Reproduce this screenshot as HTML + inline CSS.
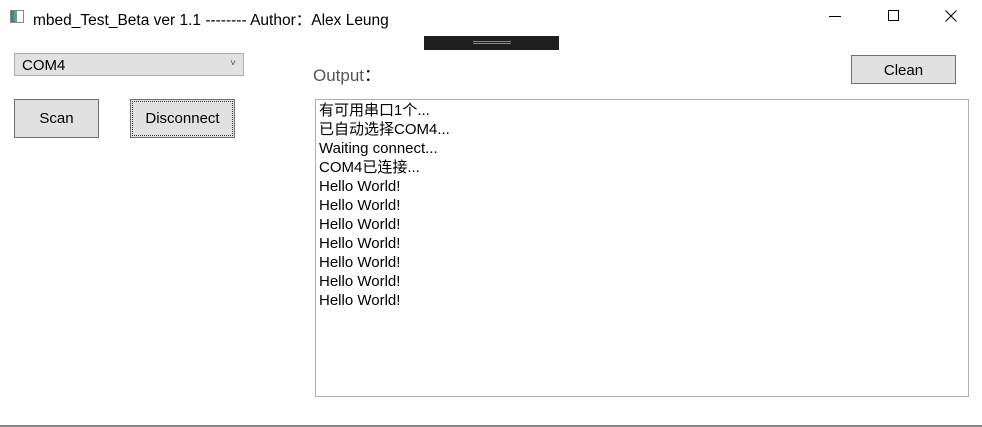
<!DOCTYPE html>
<html><head><meta charset="utf-8"><style>
body{margin:0;width:982px;height:427px;background:#fff;position:relative;overflow:hidden;font-family:"Liberation Sans","Noto Sans CJK SC",sans-serif;color:#000}
.a{position:absolute}
.btn{position:absolute;background:#e1e1e1;border:1px solid #adadad;box-sizing:border-box;font-size:15px;text-align:center}
</style></head><body>
<div class="a" style="left:10px;top:10px;width:14px;height:13px;border:1px solid #888;box-sizing:border-box;background:linear-gradient(90deg,#3a7a6a 0,#6aa 50%,#fff 50%)"></div>
<div class="a" style="left:33px;top:8px;font-size:15.5px;white-space:nowrap">mbed_Test_Beta ver 1.1 -------- Author：Alex Leung</div>
<div class="a" style="left:829px;top:16px;width:12px;height:1px;background:#000"></div>
<div class="a" style="left:888px;top:10px;width:11px;height:11px;border:1px solid #000;box-sizing:border-box"></div>
<svg class="a" style="left:945px;top:10px" width="12" height="12"><path d="M0.5 0.5L11.5 11.5M11.5 0.5L0.5 11.5" stroke="#000" stroke-width="1"/></svg>
<div class="a" style="left:424px;top:36px;width:135px;height:14px;background:#1e1e1e"></div>
<div class="a" style="left:473px;top:41px;width:38px;height:1px;background:#888"></div>
<div class="a" style="left:473px;top:43px;width:38px;height:1px;background:#888"></div>
<div class="btn" style="left:14px;top:53px;width:230px;height:23px;text-align:left;padding:3px 0 0 7px;line-height:17px">COM4<span class="a" style="right:7px;top:1px;font-size:10px;color:#555">˅</span></div>
<div class="btn" style="left:14px;top:99px;width:85px;height:39px;line-height:38px;border-color:#707070">Scan</div>
<div class="btn" style="left:130px;top:99px;width:105px;height:39px;line-height:38px;border-color:#707070"><div class="a" style="left:1px;top:1px;right:1px;bottom:1px;border:1px dotted #333"></div>Disconnect</div>
<div class="a" style="left:313px;top:61px;font-size:17px;color:#555">Output<span style="color:#000">：</span></div>
<div class="btn" style="left:851px;top:55px;width:105px;height:29px;line-height:29px;border-color:#707070">Clean</div>
<div class="a" style="left:315px;top:99px;width:654px;height:298px;border:1px solid #abadb3;box-sizing:border-box;padding:1px 0 0 3px;font-size:15px;line-height:19px">有可用串口1个...<br>已自动选择COM4...<br>Waiting connect...<br>COM4已连接...<br>Hello World!<br>Hello World!<br>Hello World!<br>Hello World!<br>Hello World!<br>Hello World!<br>Hello World!</div>
<div class="a" style="left:0;top:425px;width:982px;height:2px;background:#888"></div>
</body></html>
